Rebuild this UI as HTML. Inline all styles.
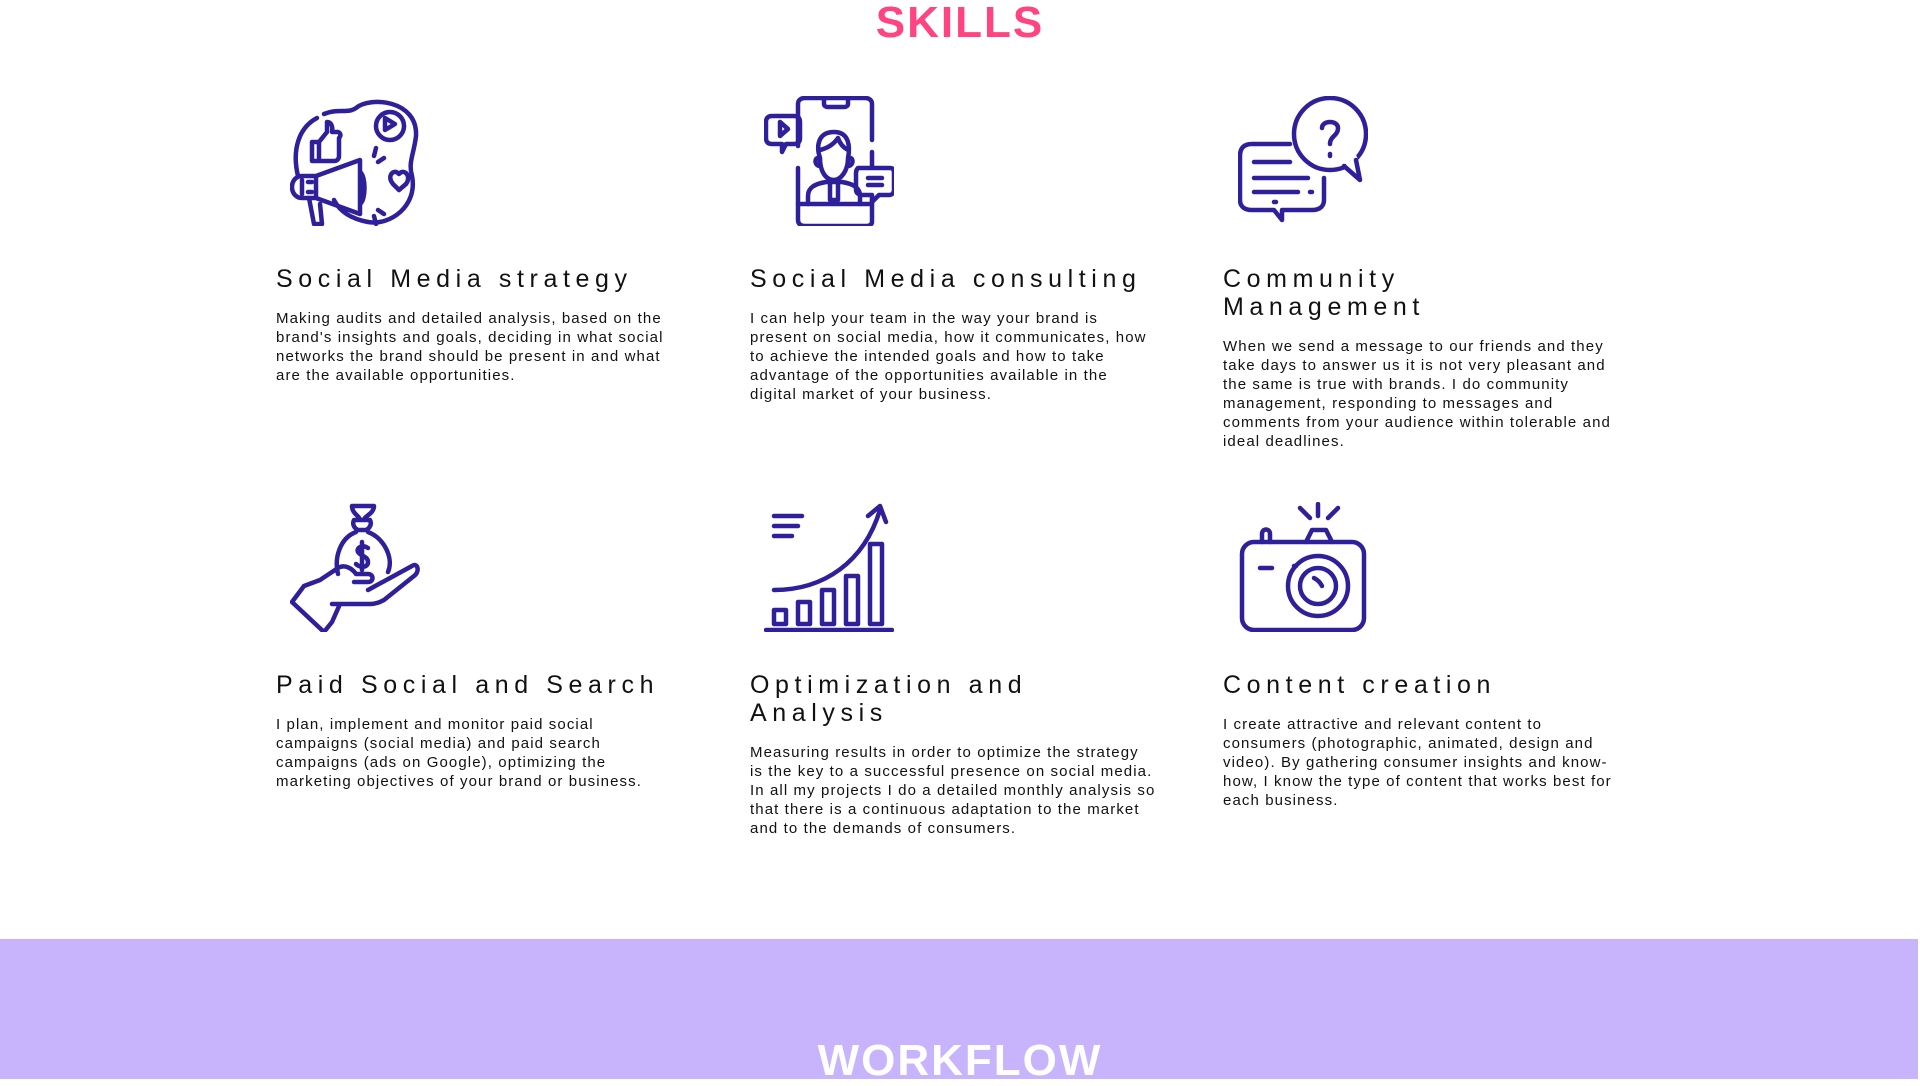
<!DOCTYPE html>
<html><head><meta charset="utf-8"><style>
*{margin:0;padding:0;box-sizing:border-box}
body{width:1920px;height:1079px;overflow:hidden;background:#fff;font-family:"Liberation Sans",sans-serif;position:relative;color:#111}
.t{position:absolute;left:0;width:1920px;text-align:center;font-weight:bold;font-size:44px;letter-spacing:2px}
.ic{position:absolute;width:130px;height:130px}
.ic svg{width:130px;height:130px;fill:none;stroke:#2e1f9a;stroke-width:4.5;stroke-linecap:round;stroke-linejoin:round}
h3{position:absolute;font-weight:normal;font-size:25px;letter-spacing:5.6px;line-height:28px;white-space:nowrap}
p{position:absolute;font-size:15px;letter-spacing:1.1px;line-height:19px;white-space:nowrap}
.band{position:absolute;left:0;top:939px;width:1918px;height:140px;background:#c8b3fd}
</style></head><body>
<div class="t" style="top:-2px;color:#ff4481">SKILLS</div>

<div class="ic" style="left:290px;top:96px"><svg viewBox="0 0 130 130">
<path d="M27 22 C8 32 2 55 8 80"/><path d="M34 18 C48 12 58 18 66 12 C80 0 128 4 126 40 C124 58 118 66 122 80 C128 110 100 130 78 126 C62 123 50 116 44 104"/>
<circle cx="100" cy="30" r="14"/>
<path d="M95 22 L105 28 L95 34 Z"/>
<path d="M22 46 V65 H29 V46 Z M29 46 L37 36 V26 C41 26 43 30 42 36 L48 36 C51 37 51 40 49 42 L49 60 C49 63 47 65 44 65 H29"/>
<path d="M26 80 H12 C6 80 2 85 2 91 C2 97 6 102 12 102 H26 Z M26 80 L70 64 V118 L26 102 Z M70 76 C76 80 76 104 70 108"/>
<path d="M12 84 V98 M18 86 H22 M18 96 H22 M19 102 L24 128 H32 L30 108"/>
<path d="M84 60 L86 52 M88 66 L94 62 M84 120 L86 128 M88 114 L94 118"/>
<path d="M116 88 C122 80 114 72 109 78 C104 72 96 80 103 88 L109 94 Z"/>
</svg></div>

<div class="ic" style="left:764px;top:96px"><svg viewBox="0 0 130 130">
<path d="M34 50 V8 C34 4 37 2 41 2 H101 C105 2 108 4 108 8 V44 M108 56 V70 M108 104 V126 C108 128 106 130 103 130 H41 C37 130 34 128 34 124 V72"/>
<path d="M60 2 V8 C60 10 62 11 64 11 H80 C82 11 84 10 84 8 V2"/>
<path d="M34 108 H108"/>
<path d="M8 20 H30 C34 20 36 22 36 26 V42 C36 46 34 48 30 48 H22 L18 56 V48 H8 C4 48 2 46 2 42 V26 C2 22 4 20 8 20 Z"/><path d="M16 26 L24 33 L16 40 Z"/>
<path d="M94 72 H126 C129 72 130 74 130 77 V94 C130 97 128 99 125 99 H115 L108 106 V99 H98 C95 99 92 97 92 94 V77 C92 74 94 72 94 72 Z"/><path d="M104 82 H118 M104 89 H118"/>
<path d="M56 62 C52 50 54 36 70 36 C86 36 86 52 84 62 C84 76 76 84 70 84 C62 84 56 76 56 62 Z M56 62 C50 60 50 70 56 70 M84 62 C90 60 90 70 84 70 M56 54 C64 52 70 48 74 42 C76 48 80 52 84 54"/>
<path d="M44 108 V100 C44 92 50 88 62 86 H78 C90 88 96 92 96 100 V108 M66 86 V104 H74 V86"/>
</svg></div>

<div class="ic" style="left:1238px;top:96px"><svg viewBox="0 0 130 130">
<path d="M52 48 H14 C6 48 2 52 2 60 V104 C2 110 6 114 14 114 H36 L44 124 V114 H74 C82 114 86 110 86 104 V82"/>
<path d="M16 66 H52 M16 82 H70 M16 96 H60 M72 96 H74 M36 106 H38"/>
<circle cx="92" cy="38" r="36"/><path d="M112 68 L124 80 L114 60" stroke="#fff" stroke-width="8"/><path d="M106 70 L122 84 L118 64"/>
<path d="M84 32 C84 24 100 24 100 32 C100 40 92 40 92 48 M92 58 V60"/>
</svg></div>

<h3 style="left:276px;top:265px">Social Media strategy</h3>
<p style="left:276px;top:309px">Making audits and detailed analysis, based on the<br>brand's insights and goals, deciding in what social<br>networks the brand should be present in and what<br>are the available opportunities.</p>

<h3 style="left:750px;top:265px">Social Media consulting</h3>
<p style="left:750px;top:309px">I can help your team in the way your brand is<br>present on social media, how it communicates, how<br>to achieve the intended goals and how to take<br>advantage of the opportunities available in the<br>digital market of your business.</p>

<h3 style="left:1223px;top:265px">Community<br>Management</h3>
<p style="left:1223px;top:337px">When we send a message to our friends and they<br>take days to answer us it is not very pleasant and<br>the same is true with brands. I do community<br>management, responding to messages and<br>comments from your audience within tolerable and<br>ideal deadlines.</p>

<div class="ic" style="left:290px;top:502px"><svg viewBox="0 0 130 130">
<path d="M62 4 H84 C84 12 74 14 74 18 M62 4 C62 12 70 14 70 18 M64 18 H80 C82 22 80 26 76 28 H68 C64 26 62 22 64 18 Z"/>
<path d="M66 30 C50 36 44 56 48 72 M78 30 C94 36 104 56 98 70"/>
<path d="M78 46 C72 42 66 46 68 50 C70 54 78 54 78 60 C78 66 70 66 66 62 M72 40 V68"/>
<path d="M30 78 L48 66 C54 62 62 66 66 72 H78 C84 72 84 80 78 80 H64 M78 88 L122 64 C128 60 130 70 124 74 L94 98 C90 100 86 102 80 102 H42 M30 78 L14 84 L2 100 L34 130 L42 120 L50 102"/>
</svg></div>

<div class="ic" style="left:764px;top:502px"><svg viewBox="0 0 130 130">
<path d="M10 88 C60 88 100 60 116 8 M104 14 L116 4 L122 20"/>
<path d="M10 14 H38 M10 24 H34 M10 34 H28"/>
<rect x="10" y="108" width="12" height="14"/><rect x="34" y="100" width="12" height="22"/><rect x="58" y="88" width="12" height="34"/><rect x="82" y="74" width="12" height="48"/><rect x="106" y="42" width="12" height="80"/>
<path d="M2 128 H128"/>
</svg></div>

<div class="ic" style="left:1238px;top:502px"><svg viewBox="0 0 130 130">
<path d="M80 2 V14 M62 6 L72 16 M100 6 L90 16"/>
<path d="M68 40 L74 28 H88 L94 40"/><path d="M24 40 V32 C24 26 32 26 32 32 V40"/>
<rect x="4" y="40" width="122" height="88" rx="12"/>
<circle cx="80" cy="84" r="30"/><circle cx="80" cy="84" r="18"/><path d="M76 76 C80 78 82 80 84 84"/>
<path d="M22 66 H34 M56 64 H58"/>
</svg></div>

<h3 style="left:276px;top:671px">Paid Social and Search</h3>
<p style="left:276px;top:715px">I plan, implement and monitor paid social<br>campaigns (social media) and paid search<br>campaigns (ads on Google), optimizing the<br>marketing objectives of your brand or business.</p>

<h3 style="left:750px;top:671px">Optimization and<br>Analysis</h3>
<p style="left:750px;top:743px">Measuring results in order to optimize the strategy<br>is the key to a successful presence on social media.<br>In all my projects I do a detailed monthly analysis so<br>that there is a continuous adaptation to the market<br>and to the demands of consumers.</p>

<h3 style="left:1223px;top:671px">Content creation</h3>
<p style="left:1223px;top:715px">I create attractive and relevant content to<br>consumers (photographic, animated, design and<br>video). By gathering consumer insights and know-<br>how, I know the type of content that works best for<br>each business.</p>

<div class="band"></div>
<div class="t" style="top:1036px;color:#fff">WORKFLOW</div>
</body></html>
